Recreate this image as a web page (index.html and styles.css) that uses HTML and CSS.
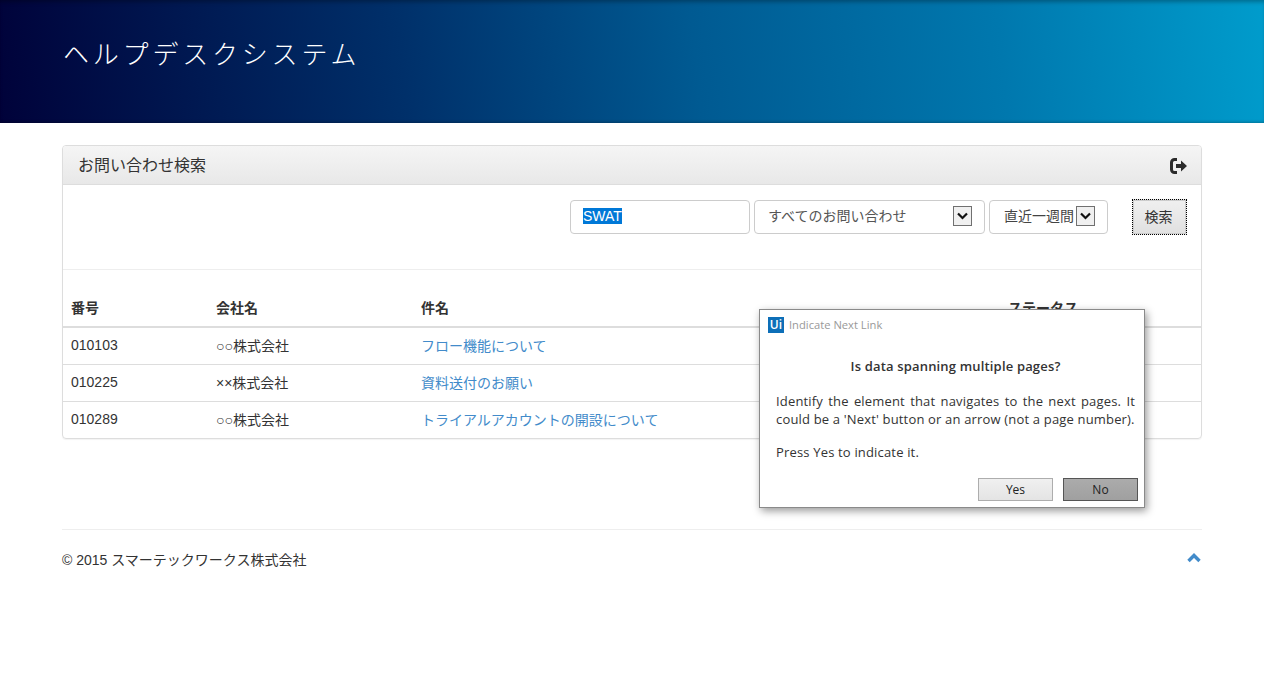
FILE: index.html
```html
<!DOCTYPE html>
<html lang="ja">
<head>
<meta charset="utf-8">
<title>ヘルプデスクシステム</title>
<link rel="stylesheet" href="styles.css">
</head>
<body>
<header class="banner"><h1 class="brand">ヘルプデスクシステム</h1></header>
<main class="container">
  <section class="panel">
    <div class="panel-heading">
      <h2 class="panel-title">お問い合わせ検索</h2>
      <svg class="logout" width="18" height="16" viewBox="0 0 18 16"><path d="M7 1.500H4.500A3 3 0 0 0 1.500 4.500v7a3 3 0 0 0 3 3H7" fill="none" stroke="#2b2b2b" stroke-width="3"/><path d="M6 6h5V2.500L17 8l-6 5.500V10H6z" fill="#2b2b2b"/></svg>
    </div>
    <form class="search">
      <div class="field field-text"><span class="selected">SWAT</span></div>
      <div class="field field-type"><span>すべてのお問い合わせ</span><i class="arrow"><svg width="11" height="8" viewBox="0 0 11 8"><path d="M1 1.500l4.500 4.500L10 1.500" fill="none" stroke="#111" stroke-width="2.200"/></svg></i></div>
      <div class="field field-period"><span>直近一週間</span><i class="arrow"><svg width="11" height="8" viewBox="0 0 11 8"><path d="M1 1.500l4.500 4.500L10 1.500" fill="none" stroke="#111" stroke-width="2.200"/></svg></i></div>
      <button class="search-btn" type="button">検索</button>
    </form>
    <table class="results">
      <thead><tr><th class="c1">番号</th><th class="c2">会社名</th><th class="c3">件名</th><th class="c4">ステータス</th></tr></thead>
      <tbody>
        <tr><td class="num">010103</td><td>○○株式会社</td><td><a href="#">フロー機能について</a></td><td></td></tr>
        <tr><td class="num">010225</td><td>××株式会社</td><td><a href="#">資料送付のお願い</a></td><td></td></tr>
        <tr class="last"><td class="num">010289</td><td>○○株式会社</td><td><a href="#">トライアルアカウントの開設について</a></td><td></td></tr>
      </tbody>
    </table>
  </section>
  <footer class="footer">
    <span>© 2015 スマーテックワークス株式会社</span>
    <svg width="14" height="10" viewBox="0 0 14 10"><path d="M1.500 8L7 2.500 12.500 8" fill="none" stroke="#428bca" stroke-width="3.400"/></svg>
  </footer>
</main>
<div class="dialog">
  <div class="dialog-title"><span class="ui-logo">Ui</span><span>Indicate Next Link</span></div>
  <p class="dialog-q">Is data spanning multiple pages?</p>
  <p class="dialog-text">Identify the element that navigates to the next pages. It could be a 'Next' button or an arrow (not a page number).</p>
  <p class="dialog-press">Press Yes to indicate it.</p>
  <div class="dialog-actions"><button type="button" class="dbtn">Yes</button><button type="button" class="dbtn dbtn-no">No</button></div>
</div>
</body>
</html>
```
FILE: styles.css
```css
* { box-sizing: border-box; }
html, body { margin: 0; padding: 0; }
body {
  background: #fff;
  color: #333;
  font-family: "Liberation Sans", "Noto Sans CJK JP", sans-serif;
  font-size: 14px;
  line-height: 20px;
  height: 684px;
  overflow: hidden;
}
.banner {
  height: 123px;
  padding: 37px 0 0 63px;
  background: linear-gradient(84deg, #00023a 0%, #00306a 32%, #005a92 55%, #0078ae 79%, #009ccc 100%);
  box-shadow: inset 0 4px 4px -2px rgba(0,0,0,.3), inset 0 -3px 3px -2px rgba(0,0,0,.25);
}
.brand {
  margin: 0;
  color: #fff;
  font-family: "Noto Sans CJK JP", sans-serif;
  font-size: 26px;
  font-weight: 300;
  letter-spacing: 3.800px;
  line-height: 32px;
}
.container { width: 1140px; margin: 22px 0 0 62px; }
.panel {
  border: 1px solid #ddd;
  border-radius: 4px;
  box-shadow: 0 1px 1px rgba(0,0,0,.05);
}
.panel-heading {
  display: flex;
  align-items: center;
  justify-content: space-between;
  height: 39px;
  padding: 1px 13px 0 15px;
  background: linear-gradient(#f5f5f5, #e8e8e8);
  border-bottom: 1px solid #ddd;
  border-radius: 3px 3px 0 0;
}
.panel-title { margin: 0; font-size: 16px; font-weight: 400; color: #333; }
.search {
  display: flex;
  align-items: flex-start;
  height: 85px;
  padding: 15px 14px 0 507px;
  border-bottom: 1px solid #eee;
  gap: 4px;
}
.field {
  display: flex;
  align-items: center;
  justify-content: space-between;
  height: 34px;
  padding-bottom: 2px;
  background: #fff;
  border: 1px solid #ccc;
  border-radius: 4px;
  color: #555;
}
.field-text { width: 180px; padding-left: 12px; justify-content: flex-start; }
.field-type { width: 231px; padding-left: 13px; padding-right: 12px; }
.field-period { width: 119px; padding-left: 14px; padding-right: 12px; margin-right: 20px; justify-content: flex-start; gap: 2px; color: #444; }
.selected { background: #0078d7; color: #fff; line-height: 16px; }
.arrow {
  display: flex;
  align-items: center;
  justify-content: center;
  width: 19px;
  height: 20px;
  flex: none;
  background: #f0f0f0;
  border: 1px solid #707070;
}
.search-btn {
  width: 55px;
  height: 36px;
  margin-top: -1px;
  padding: 0 2px 0 0;
  font: inherit;
  color: #333;
  background: linear-gradient(#f0f0f0, #e0e0e0);
  border: 1px dotted #000;
  outline: 0;
  box-shadow: inset 0 0 0 1px #ccc;
}
.results { width: 100%; border-collapse: collapse; table-layout: fixed; }
.results th {
  height: 57px;
  padding: 8px;
  vertical-align: bottom;
  text-align: left;
  border-bottom: 2px solid #ddd;
  line-height: 20px;
  color: #333;
}
.results td { height: 37px; padding: 7px 8px 8px; border-top: 1px solid #ddd; vertical-align: middle; line-height: 20px; }
.results tbody tr:first-child td { border-top: 0; padding-top: 8px; }
.results td.num { padding-bottom: 9px; padding-top: 6px; }
.results tbody tr:first-child td.num { padding-top: 7px; }
.results tr.last td { height: 36px; padding-bottom: 7px; }
.results tr.last td.num { padding-bottom: 8px; }
.c1 { width: 145px; }
.c2 { width: 205px; }
.c3 { width: 587px; }
.results a { color: #428bca; text-decoration: none; }
.footer {
  display: flex;
  align-items: flex-start;
  justify-content: space-between;
  height: 60px;
  margin-top: 90px;
  padding: 20px 1px 0 0;
  border-top: 1px solid #eee;
  color: #333;
}
.footer svg { margin-top: 3px; }
.dialog {
  position: absolute;
  left: 759px;
  top: 309px;
  width: 386px;
  height: 199px;
  padding: 0 9px 0 16px;
  background: #fff;
  border: 1px solid #8a8a8a;
  box-shadow: 2px 3px 8px rgba(0,0,0,.4);
  font-family: "Open Sans", "Noto Sans", sans-serif;
  font-size: 13px;
  letter-spacing: .17px;
  line-height: 18px;
  color: #333;
}
.dialog-title {
  display: flex;
  align-items: center;
  gap: 5px;
  height: 29px;
  margin: 0 0 0 -8px;
  padding-top: 1px;
  font-size: 11.200px;
  letter-spacing: 0;
  color: #999;
}
.ui-logo {
  display: inline-block;
  width: 16px;
  height: 16px;
  background: #0d6fb8;
  color: #fff;
  font-size: 12px;
  font-weight: 600;
  line-height: 16px;
  text-align: center;
}
.dialog p { margin: 0; }
.dialog-q { padding-top: 18px; height: 53px; font-weight: 600; text-align: center; }
.dialog-text { width: 359px; text-align: justify; height: 51px; }
.dialog-press { height: 26px; }
.dialog-actions { display: flex; justify-content: flex-end; gap: 10px; margin-top: 9px; margin-right: -3px; }
.dbtn {
  width: 75px;
  height: 23px;
  padding: 0;
  font: inherit;
  font-size: 12px;
  letter-spacing: 0;
  line-height: 20px;
  color: #222;
  background: linear-gradient(#f0f0f0, #e4e4e4);
  border: 1px solid #adadad;
}
.dbtn-no { background: linear-gradient(#ababab, #a0a0a0); border-color: #555; }
```
